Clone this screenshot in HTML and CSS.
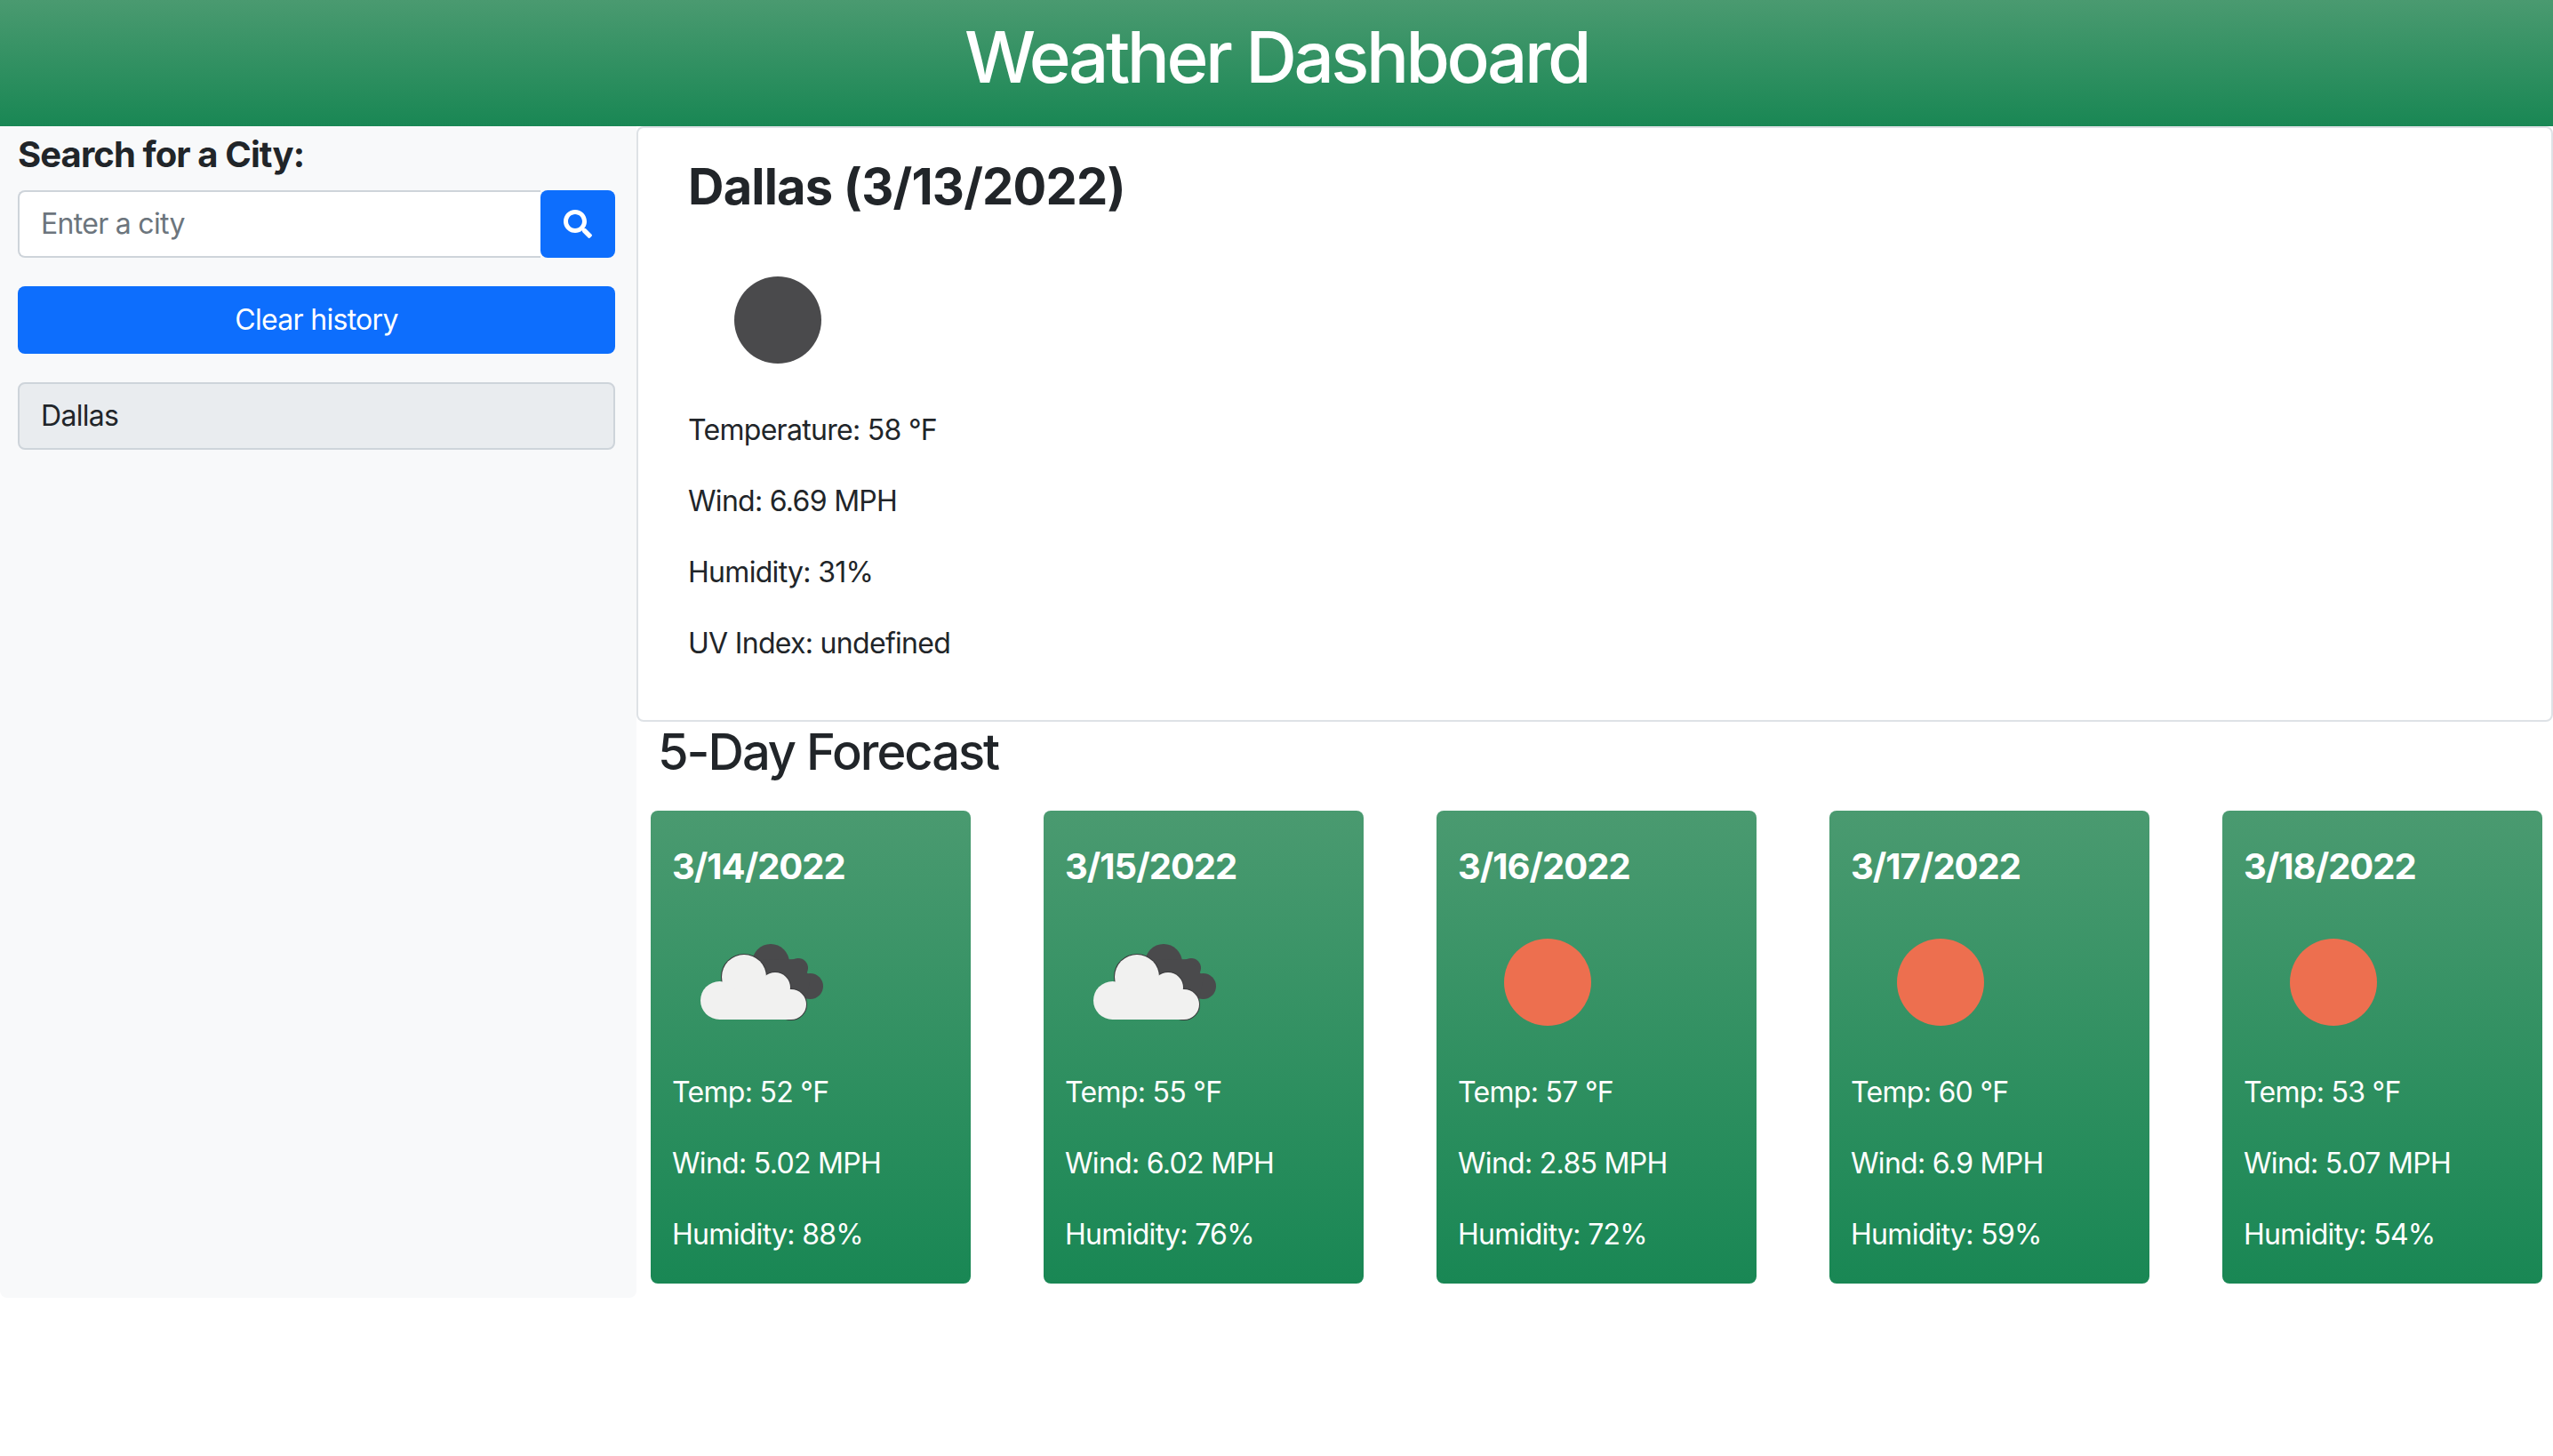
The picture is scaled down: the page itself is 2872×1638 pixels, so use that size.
FILE: index.html
```html
<!DOCTYPE html>
<html lang="en">
<head>
  <meta charset="UTF-8" />
  <meta name="viewport" content="width=device-width, initial-scale=1.0" />
  <title>Weather Dashboard</title>
  <link rel="stylesheet" href="styles.css">
</head>
<body>
  <header class="top-bar">
    <h1>Weather Dashboard</h1>
  </header>

  <div class="page">
    <aside class="sidebar">
      <h2>Search for a City:</h2>
      <form class="search">
        <input type="text" placeholder="Enter a city" />
        <button type="button" class="search-btn" aria-label="Search">
          <svg viewBox="0 0 512 512"><path d="M505 442.7L405.3 343c-4.5-4.5-10.6-7-17-7H372c27.6-35.3 44-79.7 44-128C416 93.1 322.9 0 208 0S0 93.1 0 208s93.1 208 208 208c48.3 0 92.7-16.4 128-44v16.3c0 6.4 2.5 12.5 7 17l99.7 99.7c9.4 9.4 24.6 9.4 33.9 0l28.3-28.3c9.4-9.4 9.4-24.6.1-34zM208 336c-70.7 0-128-57.2-128-128 0-70.7 57.2-128 128-128 70.7 0 128 57.2 128 128 0 70.7-57.2 128-128 128z"/></svg>
        </button>
      </form>
      <button type="button" class="clear-btn">Clear history</button>
      <button type="button" class="history-item">Dallas</button>
    </aside>

    <main class="content">
      <section class="current">
        <h3>Dallas (3/13/2022)</h3>
        <svg class="icon" viewBox="0 0 200 200"><circle class="dark" cx="101" cy="100" r="49"/></svg>
        <p>Temperature: 58 °F</p>
        <p>Wind: 6.69 MPH</p>
        <p>Humidity: 31%</p>
        <p>UV Index: undefined</p>
      </section>

      <h3 class="forecast-title">5-Day Forecast</h3>
      <div class="forecast">
        <article class="day">
          <h4>3/14/2022</h4>
          <svg class="icon" viewBox="0 0 200 200"><use href="#clouds"/></svg>
          <p>Temp: 52 °F</p>
          <p>Wind: 5.02 MPH</p>
          <p>Humidity: 88%</p>
        </article>
        <article class="day">
          <h4>3/15/2022</h4>
          <svg class="icon" viewBox="0 0 200 200"><use href="#clouds"/></svg>
          <p>Temp: 55 °F</p>
          <p>Wind: 6.02 MPH</p>
          <p>Humidity: 76%</p>
        </article>
        <article class="day">
          <h4>3/16/2022</h4>
          <svg class="icon" viewBox="0 0 200 200"><circle class="sun" cx="101" cy="100" r="49"/></svg>
          <p>Temp: 57 °F</p>
          <p>Wind: 2.85 MPH</p>
          <p>Humidity: 72%</p>
        </article>
        <article class="day">
          <h4>3/17/2022</h4>
          <svg class="icon" viewBox="0 0 200 200"><circle class="sun" cx="101" cy="100" r="49"/></svg>
          <p>Temp: 60 °F</p>
          <p>Wind: 6.9 MPH</p>
          <p>Humidity: 59%</p>
        </article>
        <article class="day">
          <h4>3/18/2022</h4>
          <svg class="icon" viewBox="0 0 200 200"><circle class="sun" cx="101" cy="100" r="49"/></svg>
          <p>Temp: 53 °F</p>
          <p>Wind: 5.07 MPH</p>
          <p>Humidity: 54%</p>
        </article>
      </div>
    </main>
  </div>

  <!-- cloud icon shared by the forecast cards -->
  <svg class="defs" width="0" height="0">
    <defs>
      <g id="clouds" transform="translate(1 0)">
        <g class="dark">
          <circle cx="110" cy="78" r="21"/>
          <circle cx="141" cy="84" r="11"/>
          <circle cx="154.5" cy="104.5" r="14.5"/>
          <path d="M100 75 L140 74 L155 95 L150 119 L120 119 Z"/>
        </g>
        <g class="cloud-edge">
          <circle cx="80" cy="94" r="25"/>
          <circle cx="115" cy="106" r="17"/>
          <circle cx="133" cy="125" r="17"/>
        </g>
        <g class="cloud">
          <circle cx="80" cy="94" r="25"/>
          <circle cx="115" cy="106" r="17"/>
          <circle cx="133" cy="125" r="17"/>
          <circle cx="52.5" cy="120.5" r="21.5"/>
          <rect x="52" y="108" width="81" height="34"/>
        </g>
      </g>
    </defs>
  </svg>
</body>
</html>
```

FILE: styles.css
```css
* {
  box-sizing: border-box;
}
body {
  margin: 0;
  font-family: Inter, "Liberation Sans", sans-serif;
  font-size: 32px;
  line-height: 48px;
  letter-spacing: -0.7px;
  color: #212529;
  background: #fff;
}
p {
  margin: 0 0 32px;
}

/* Header */
.top-bar {
  height: 142px;
  padding-top: 16px;
  text-align: center;
  color: #fff;
  background: linear-gradient(180deg, #4a9a70, #198754);
}
.top-bar h1 {
  margin: 0;
  font-size: 80px;
  font-weight: 500;
  line-height: 96px;
  letter-spacing: -3.5px;
}

.page {
  display: flex;
  align-items: flex-start;
}

/* Sidebar */
.sidebar {
  flex: none;
  display: flex;
  flex-direction: column;
  width: 716px;
  height: 1318px;
  padding: 8px 24px 0 20px;
  background: #f8f9fa;
  border-radius: 0 0 8px 8px;
}
.sidebar h2 {
  margin: 0 0 16px;
  font-size: 40px;
  font-weight: 700;
  line-height: 48px;
  letter-spacing: -0.9px;
}
.search {
  display: flex;
  height: 76px;
  margin-bottom: 32px;
}
.search input {
  flex: 1;
  min-width: 0;
  padding: 0 24px;
  font: inherit;
  letter-spacing: inherit;
  color: #212529;
  background: #fff;
  border: 2px solid #ced4da;
  border-right: 0;
  border-radius: 8px 0 0 8px;
}
.search input::placeholder {
  color: #6c757d;
}
.search-btn {
  display: flex;
  align-items: center;
  justify-content: center;
  width: 84px;
  padding: 0;
  background: #0d6efd;
  border: 0;
  border-radius: 8px;
}
.search-btn svg {
  width: 32px;
  height: 32px;
  fill: #fff;
}
.clear-btn {
  height: 76px;
  margin-bottom: 32px;
  font: inherit;
  letter-spacing: inherit;
  color: #fff;
  background: #0d6efd;
  border: 0;
  border-radius: 8px;
}
.history-item {
  height: 76px;
  padding: 0 24px;
  font: inherit;
  letter-spacing: inherit;
  text-align: left;
  color: #212529;
  background: #e9ecef;
  border: 2px solid #ced4da;
  border-radius: 8px;
}

/* Current weather */
.content {
  flex: 1;
  min-width: 0;
}
.current {
  padding: 32px 32px 30px 56px;
  border: 2px solid #dee2e6;
  border-radius: 8px;
}
.current h3 {
  margin: 0 0 16px;
  font-size: 56px;
  font-weight: 700;
  line-height: 68px;
  letter-spacing: -0.8px;
}
.icon {
  display: block;
  width: 200px;
  height: 200px;
}
.dark {
  fill: #4a4a4c;
}
.sun {
  fill: #ed6f4f;
}
.cloud {
  fill: #f1f1f0;
}
.cloud-edge {
  fill: #3c3c3e;
  stroke: #3c3c3e;
  stroke-width: 2;
}
.defs {
  position: absolute;
}

/* Forecast */
.forecast-title {
  margin: 0 0 32px 24px;
  font-size: 56px;
  font-weight: 500;
  line-height: 68px;
  letter-spacing: -2px;
}
.forecast {
  display: flex;
  gap: 82px;
  padding-left: 16px;
}
.day {
  flex: none;
  width: 360px;
  height: 532px;
  padding: 39px 24px 0;
  color: #fff;
  background: linear-gradient(180deg, #4a9a70, #198754);
  border-radius: 8px;
}
.day h4 {
  margin: 0 0 6px;
  font-size: 40px;
  font-weight: 700;
  line-height: 48px;
  letter-spacing: -1px;
}
```
